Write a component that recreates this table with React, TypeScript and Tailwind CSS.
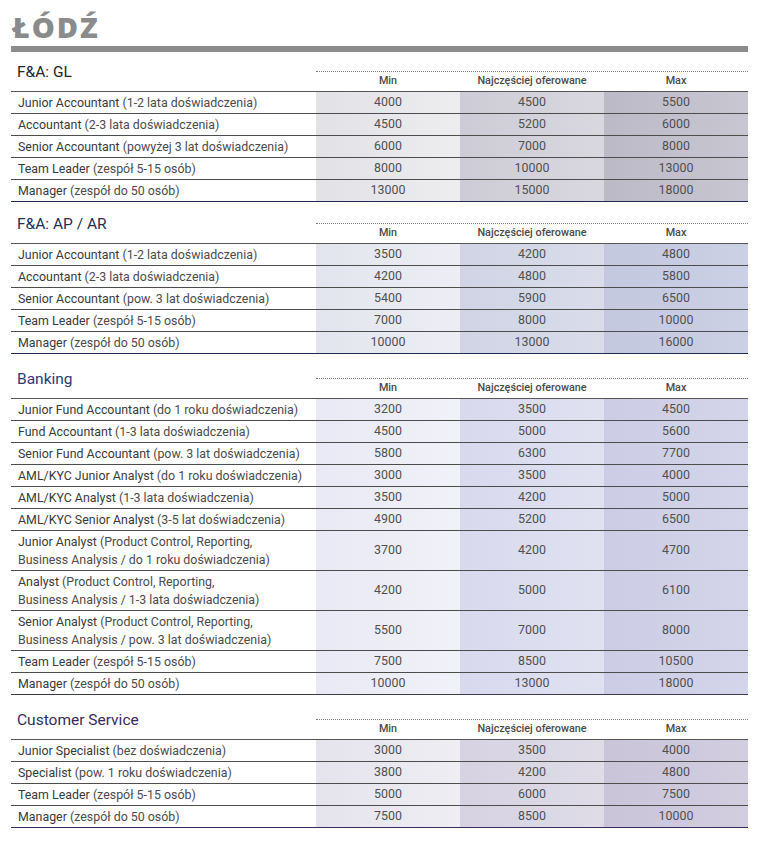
type Row = {
  title: string;
  note: string;
  note2?: string;
  values: [string, string, string];
};

type Theme = {
  heading: string;
  last: string;
  cols: [string, string, string];
};

type Section = {
  name: string;
  gap: string;
  theme: Theme;
  rows: Row[];
};

const sections: Section[] = [
  {
    name: 'F&A: GL',
    gap: 'mt-[19px]',
    theme: {
      heading: 'text-[#262626]',
      last: 'border-[#1f2b52]',
      cols: [
        'bg-linear-to-r from-[#e2e2e6] to-[#ededf0]',
        'bg-linear-to-r from-[#cdccd6] to-[#d9d8df]',
        'bg-linear-to-r from-[#bcbac7] to-[#c8c6d1]',
      ],
    },
    rows: [
      { title: 'Junior Accountant', note: '(1-2 lata doświadczenia)', values: ['4000', '4500', '5500'] },
      { title: 'Accountant', note: '(2-3 lata doświadczenia)', values: ['4500', '5200', '6000'] },
      { title: 'Senior Accountant', note: '(powyżej 3 lat doświadczenia)', values: ['6000', '7000', '8000'] },
      { title: 'Team Leader', note: '(zespół 5-15 osób)', values: ['8000', '10000', '13000'] },
      { title: 'Manager', note: '(zespół do 50 osób)', values: ['13000', '15000', '18000'] },
    ],
  },
  {
    name: 'F&A: AP / AR',
    gap: 'mt-[21px]',
    theme: {
      heading: 'text-[#22315a]',
      last: 'border-[#1f2b52]',
      cols: [
        'bg-linear-to-r from-[#e3e5ee] to-[#edeef4]',
        'bg-linear-to-r from-[#d0d4e4] to-[#dadcea]',
        'bg-linear-to-r from-[#c3c8df] to-[#ccd0e5]',
      ],
    },
    rows: [
      { title: 'Junior Accountant', note: '(1-2 lata doświadczenia)', values: ['3500', '4200', '4800'] },
      { title: 'Accountant', note: '(2-3 lata doświadczenia)', values: ['4200', '4800', '5800'] },
      { title: 'Senior Accountant', note: '(pow. 3 lat doświadczenia)', values: ['5400', '5900', '6500'] },
      { title: 'Team Leader', note: '(zespół 5-15 osób)', values: ['7000', '8000', '10000'] },
      { title: 'Manager', note: '(zespół do 50 osób)', values: ['10000', '13000', '16000'] },
    ],
  },
  {
    name: 'Banking',
    gap: 'mt-[24px]',
    theme: {
      heading: 'text-[#2b3a78]',
      last: 'border-[#3a3a4a]',
      cols: [
        'bg-linear-to-r from-[#e9e9f5] to-[#f1f1f8]',
        'bg-linear-to-r from-[#d8d9ed] to-[#e0e1f0]',
        'bg-linear-to-r from-[#cccde5] to-[#d4d5e9]',
      ],
    },
    rows: [
      { title: 'Junior Fund Accountant', note: '(do 1 roku doświadczenia)', values: ['3200', '3500', '4500'] },
      { title: 'Fund Accountant', note: '(1-3 lata doświadczenia)', values: ['4500', '5000', '5600'] },
      { title: 'Senior Fund Accountant', note: '(pow. 3 lat doświadczenia)', values: ['5800', '6300', '7700'] },
      { title: 'AML/KYC Junior Analyst', note: '(do 1 roku doświadczenia)', values: ['3000', '3500', '4000'] },
      { title: 'AML/KYC Analyst', note: '(1-3 lata doświadczenia)', values: ['3500', '4200', '5000'] },
      { title: 'AML/KYC Senior Analyst', note: '(3-5 lat doświadczenia)', values: ['4900', '5200', '6500'] },
      {
        title: 'Junior Analyst',
        note: '(Product Control, Reporting,',
        note2: 'Business Analysis / do 1 roku doświadczenia)',
        values: ['3700', '4200', '4700'],
      },
      {
        title: 'Analyst',
        note: '(Product Control, Reporting,',
        note2: 'Business Analysis / 1-3 lata doświadczenia)',
        values: ['4200', '5000', '6100'],
      },
      {
        title: 'Senior Analyst',
        note: '(Product Control, Reporting,',
        note2: 'Business Analysis / pow. 3 lat doświadczenia)',
        values: ['5500', '7000', '8000'],
      },
      { title: 'Team Leader', note: '(zespół 5-15 osób)', values: ['7500', '8500', '10500'] },
      { title: 'Manager', note: '(zespół do 50 osób)', values: ['10000', '13000', '18000'] },
    ],
  },
  {
    name: 'Customer Service',
    gap: 'mt-[24px]',
    theme: {
      heading: 'text-[#3b2a5a]',
      last: 'border-[#3b2a5e]',
      cols: [
        'bg-linear-to-r from-[#e5e3ec] to-[#efeef3]',
        'bg-linear-to-r from-[#d6d2e2] to-[#dfdce8]',
        'bg-linear-to-r from-[#c9c4d8] to-[#d2cee0]',
      ],
    },
    rows: [
      { title: 'Junior Specialist', note: '(bez doświadczenia)', values: ['3000', '3500', '4000'] },
      { title: 'Specialist', note: '(pow. 1 roku doświadczenia)', values: ['3800', '4200', '4800'] },
      { title: 'Team Leader', note: '(zespół 5-15 osób)', values: ['5000', '6000', '7500'] },
      { title: 'Manager', note: '(zespół do 50 osób)', values: ['7500', '8500', '10000'] },
    ],
  },
];

function SalaryTable({ section }: { section: Section }) {
  const { theme } = section;

  return (
    <section className={section.gap}>
      {/* Heading + column captions */}
      <div className="flex">
        <div className={`-mt-[8px] w-[305px] pl-[6px] text-[15.5px] leading-[18px] ${theme.heading}`}>
          {section.name}
        </div>
        <div className="flex-1 border-t border-dotted border-[#7a7a7a]">
          <div className="grid h-[19px] grid-cols-3 items-center text-center text-[10.8px] font-medium text-[#4a4a4a]">
            <span>Min</span>
            <span>Najczęściej oferowane</span>
            <span>Max</span>
          </div>
        </div>
      </div>

      {/* Rows */}
      <div className="border-t border-[#555]">
        {section.rows.map((row, i) => {
          const isLast = i === section.rows.length - 1;
          return (
            <div
              key={i}
              className={`grid grid-cols-[305px_144px_144px_144px] border-b ${
                row.note2 ? 'h-[40px]' : 'h-[22px]'
              } ${isLast ? theme.last : 'border-[#4d4d4d]'}`}
            >
              <div className="flex flex-col justify-center pl-[7px] text-[12.4px] leading-[18px] text-[#4c4c4c]">
                <div>
                  <span className="text-[#3a3a3a]">{row.title}</span> {row.note}
                </div>
                {row.note2 && <div>{row.note2}</div>}
              </div>
              {row.values.map((v, j) => (
                <div
                  key={j}
                  className={`flex items-center justify-center text-[12.4px] text-[#505050] ${theme.cols[j]}`}
                >
                  {v}
                </div>
              ))}
            </div>
          );
        })}
      </div>
    </section>
  );
}

export default function App() {
  return (
    <div className="min-h-[853px] w-[767px] bg-white font-[Roboto,sans-serif]">
      <div className="w-[759px] px-[11px] pt-[13px]">
        <h1 className="pl-[1px] font-['Open_Sans',sans-serif] text-[29px] leading-[28px] font-extrabold tracking-[2px] text-[#8b8b8b]">
          ŁÓDŹ
        </h1>
        <div className="mt-[5px] h-[6px] bg-[#8c8c8c]" />

        {sections.map((s) => (
          <SalaryTable key={s.name} section={s} />
        ))}
      </div>
    </div>
  );
}
